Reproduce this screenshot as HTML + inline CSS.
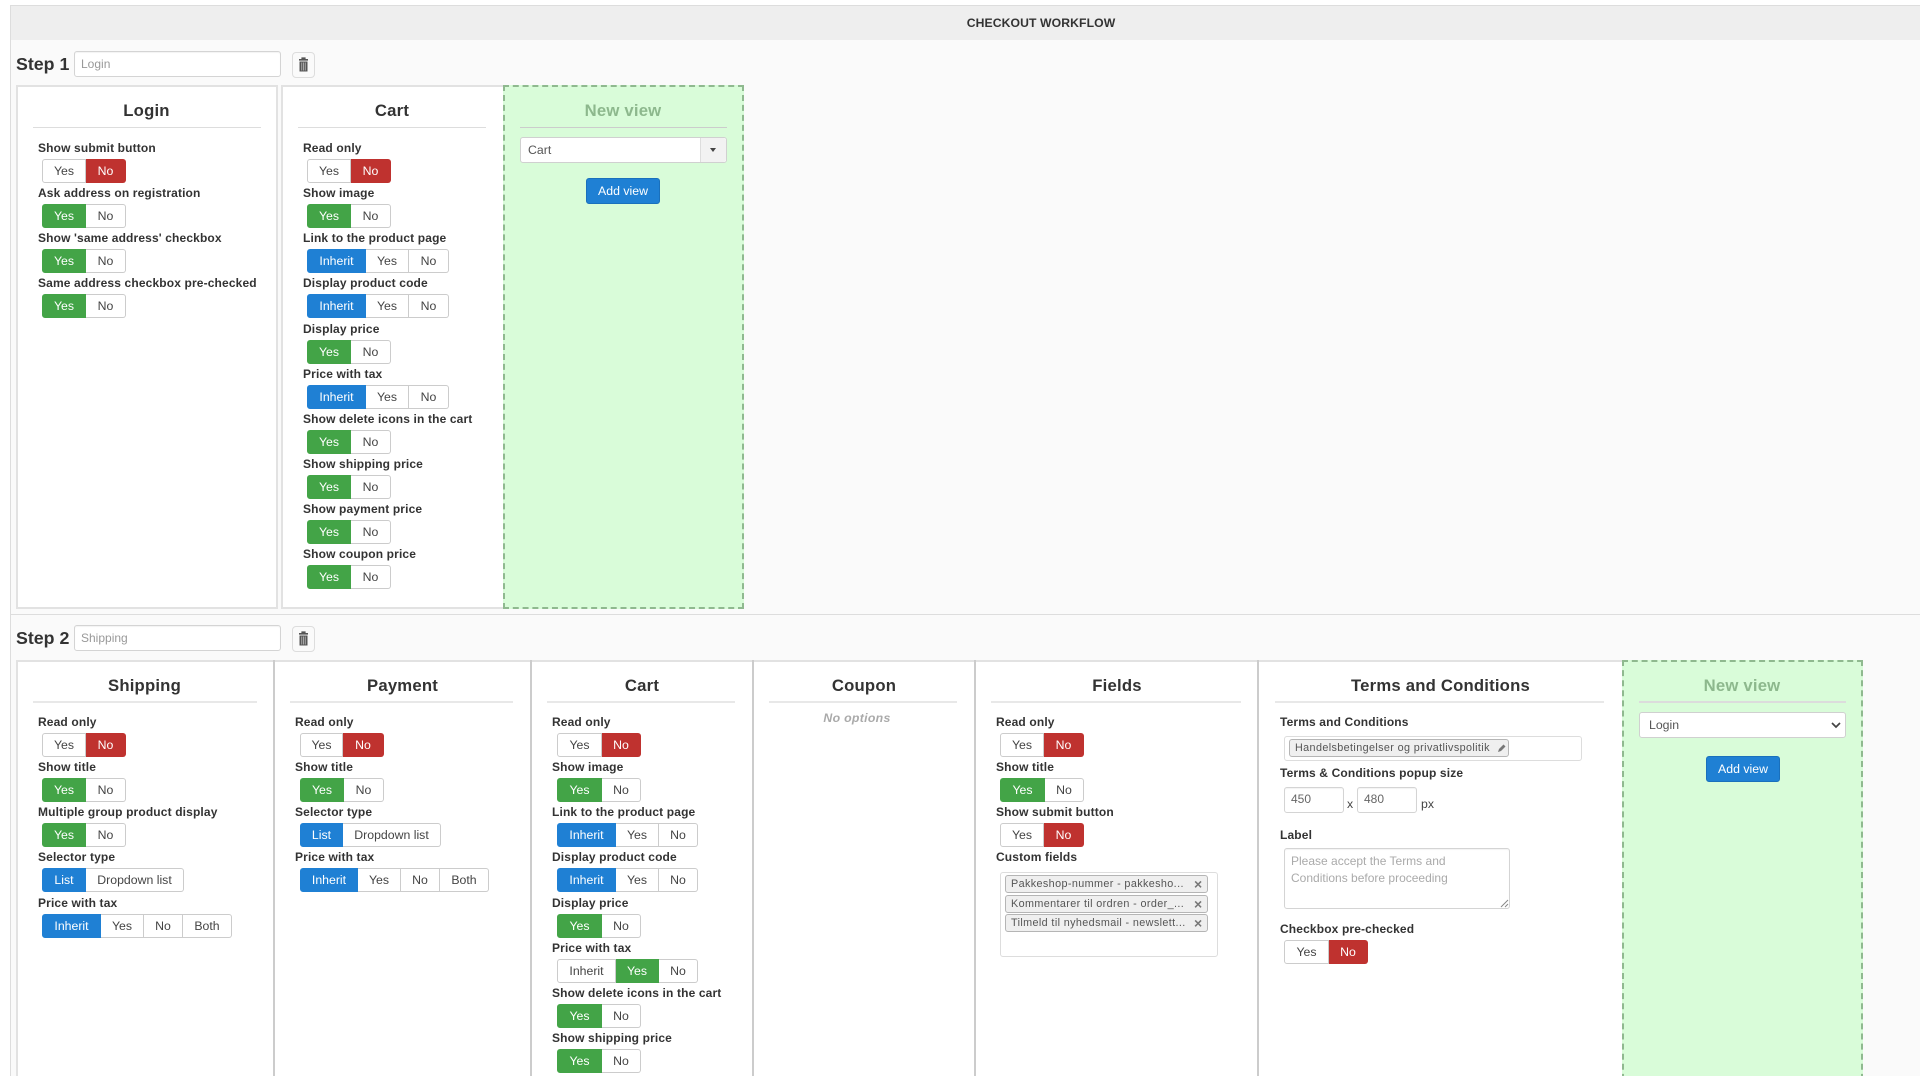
<!DOCTYPE html>
<html><head><meta charset="utf-8"><title>Checkout workflow</title>
<style>
html,body{margin:0;padding:0;background:#fff;width:1920px;height:1076px;overflow:hidden}
body{position:relative;font-family:"Liberation Sans",Arial,sans-serif;color:#333;filter:blur(.3px)}
.a{position:absolute}
#bg{left:10px;top:5px;width:1910px;height:1071px;background:#fafafa;border-left:1px solid #ddd;box-sizing:border-box}
#hd{left:10px;top:5px;width:1910px;height:35px;background:#eee;border-top:1px solid #ddd;border-left:1px solid #ddd;box-sizing:border-box;text-align:center;font-size:12.2px;line-height:35px;color:#333;font-weight:bold;text-indent:151px;letter-spacing:.1px}
#sep{left:11px;top:614px;width:1909px;height:1px;background:#ddd}
.st{font-size:17.8px;font-weight:bold;color:#333;left:16px;line-height:24px}
.in{background:#fff;border:1px solid #d4d4d4;border-radius:3px;box-sizing:border-box;box-shadow:inset 0 1px 1px rgba(0,0,0,.05);font-size:12px;color:#999;padding-left:6px}
.tr{left:292px;width:23px;height:26px;border:1px solid #ddd;border-radius:4px;box-sizing:border-box;background:#fafafa}
.p{background:#fff;border:2px solid #e2e2e2;box-sizing:border-box}
.ti{font-size:16.7px;font-weight:bold;color:#333;text-align:center;line-height:23px;letter-spacing:.2px;white-space:nowrap}
.hr{height:2px;background:#e8e8e8}
.c{position:absolute}
.r{height:45.17px;position:relative}
.r b{position:absolute;left:-4px;top:-1px;font-size:12px;line-height:19px;color:#333;white-space:nowrap;letter-spacing:.14px}
.g{position:absolute;left:0;top:19px;height:24px;display:flex;font-size:12.3px;line-height:22px;color:#444;text-align:center}
.g i{font-style:normal;display:block;box-sizing:border-box;background:#fff;border:1px solid #ccc;border-left:0;height:24px}
.g i:first-child{border-left:1px solid #ccc;border-radius:3px 0 0 3px}
.g i:last-child{border-radius:0 3px 3px 0}
.g i.gr{background:#43a447;border-color:#43a447;color:#fff}
.g i.rd{background:#bf322f;border-color:#bf322f;color:#fff}
.g i.bl{background:#1f80d4;border-color:#1f80d4;color:#fff}
.nv{background:#d9fcd9;border:2px dashed #8fb98f;box-sizing:border-box}
.nt{color:#8db88d}
.btn{background:#1f80d4;border:1px solid #1a70bc;border-radius:3px;color:#fff;font-size:12.3px;text-align:center;line-height:24px;box-sizing:border-box;width:74px;height:26px}
.sel{background:#fff;border:1px solid #d0d0d0;border-radius:3px;box-sizing:border-box;font-size:12.3px;color:#555;height:26px;line-height:24px;padding-left:7px}
.tag{background:#efefef;border:1px solid #b5b5b5;border-radius:3px;box-sizing:border-box;font-size:10.8px;color:#555;line-height:16px;padding-left:5px;white-space:nowrap;letter-spacing:.38px;overflow:hidden;height:18px}
.x{font-size:14px;color:#777;font-weight:bold;line-height:16px}
.l{font-size:12px;font-weight:bold;color:#333;line-height:16px;white-space:nowrap;letter-spacing:.14px}
</style></head><body>
<div class="a" id="bg"></div>
<div class="a" id="hd">CHECKOUT WORKFLOW</div>
<div class="a" id="sep"></div>

<div class="a st" style="top:52px">Step 1</div>
<div class="a in" style="left:74px;top:51px;width:207px;height:26px;line-height:24px">Login</div>
<div class="a tr" style="top:52px"><svg width="21" height="24" viewBox="0 0 21 24" style="display:block"><path d="M6 6h9v1.6H6z M8.4 4.4h4.2v1.6H8.4z M6.5 8.5h8v10h-8z" fill="#555"/><path d="M8.8 9.5v8M10.5 9.5v8M12.2 9.5v8" stroke="#ccc" stroke-width=".7"/></svg></div>

<div class="a p" style="left:16px;top:85px;width:262px;height:524px"></div>
<div class="a ti" style="left:16px;top:99px;width:261px">Login</div>
<div class="a hr" style="left:33px;top:127px;width:228px;height:1px;background:#ddd"></div>
<div class="c" style="left:42px;top:140px">
<div class="r"><b>Show submit button</b><div class="g"><i style="width:44px">Yes</i><i class="rd" style="width:40px">No</i></div></div>
<div class="r"><b>Ask address on registration</b><div class="g"><i class="gr" style="width:44px">Yes</i><i style="width:40px">No</i></div></div>
<div class="r"><b>Show 'same address' checkbox</b><div class="g"><i class="gr" style="width:44px">Yes</i><i style="width:40px">No</i></div></div>
<div class="r"><b>Same address checkbox pre-checked</b><div class="g"><i class="gr" style="width:44px">Yes</i><i style="width:40px">No</i></div></div>
</div>

<div class="a p" style="left:281px;top:85px;width:224px;height:524px"></div>
<div class="a ti" style="left:281px;top:99px;width:222px">Cart</div>
<div class="a hr" style="left:298px;top:127px;width:188px;height:1px;background:#ddd"></div>
<div class="c" style="left:307px;top:140px">
<div class="r"><b>Read only</b><div class="g"><i style="width:44px">Yes</i><i class="rd" style="width:40px">No</i></div></div>
<div class="r"><b>Show image</b><div class="g"><i class="gr" style="width:44px">Yes</i><i style="width:40px">No</i></div></div>
<div class="r"><b>Link to the product page</b><div class="g"><i class="bl" style="width:59px">Inherit</i><i style="width:43px">Yes</i><i style="width:40px">No</i></div></div>
<div class="r"><b>Display product code</b><div class="g"><i class="bl" style="width:59px">Inherit</i><i style="width:43px">Yes</i><i style="width:40px">No</i></div></div>
<div class="r"><b>Display price</b><div class="g"><i class="gr" style="width:44px">Yes</i><i style="width:40px">No</i></div></div>
<div class="r"><b>Price with tax</b><div class="g"><i class="bl" style="width:59px">Inherit</i><i style="width:43px">Yes</i><i style="width:40px">No</i></div></div>
<div class="r"><b>Show delete icons in the cart</b><div class="g"><i class="gr" style="width:44px">Yes</i><i style="width:40px">No</i></div></div>
<div class="r"><b>Show shipping price</b><div class="g"><i class="gr" style="width:44px">Yes</i><i style="width:40px">No</i></div></div>
<div class="r"><b>Show payment price</b><div class="g"><i class="gr" style="width:44px">Yes</i><i style="width:40px">No</i></div></div>
<div class="r"><b>Show coupon price</b><div class="g"><i class="gr" style="width:44px">Yes</i><i style="width:40px">No</i></div></div>
</div>

<div class="a nv" style="left:503px;top:85px;width:241px;height:524px"></div>
<div class="a ti nt" style="left:503px;top:99px;width:240px">New view</div>
<div class="a hr" style="left:520px;top:127px;width:207px;height:1px;background:#ccc"></div>
<div class="a sel" style="left:520px;top:137px;width:207px">Cart</div>
<div class="a" style="left:700px;top:138px;width:26px;height:24px;background:#f2f2f2;border-left:1px solid #ddd;box-sizing:border-box;border-radius:0 3px 3px 0"></div>
<div class="a" style="left:710px;top:148px;width:0;height:0;border-left:3.5px solid transparent;border-right:3.5px solid transparent;border-top:4px solid #444"></div>
<div class="a btn" style="left:586px;top:178px">Add view</div>

<div class="a st" style="top:626px">Step 2</div>
<div class="a in" style="left:74px;top:625px;width:207px;height:26px;line-height:24px">Shipping</div>
<div class="a tr" style="top:626px"><svg width="21" height="24" viewBox="0 0 21 24" style="display:block"><path d="M6 6h9v1.6H6z M8.4 4.4h4.2v1.6H8.4z M6.5 8.5h8v10h-8z" fill="#555"/><path d="M8.8 9.5v8M10.5 9.5v8M12.2 9.5v8" stroke="#ccc" stroke-width=".7"/></svg></div>

<div class="a p" style="left:16px;top:660px;width:1608px;height:430px"></div>
<div class="a" style="left:273px;top:660px;width:2px;height:416px;background:#ccc"></div>
<div class="a" style="left:530px;top:660px;width:2px;height:416px;background:#ccc"></div>
<div class="a" style="left:752px;top:660px;width:2px;height:416px;background:#ccc"></div>
<div class="a" style="left:974px;top:660px;width:2px;height:416px;background:#ccc"></div>
<div class="a" style="left:1257px;top:660px;width:2px;height:416px;background:#ccc"></div>

<div class="a ti" style="left:16px;top:674px;width:257px">Shipping</div>
<div class="a hr" style="left:33px;top:701px;width:224px"></div>
<div class="c" style="left:42px;top:714px">
<div class="r"><b>Read only</b><div class="g"><i style="width:44px">Yes</i><i class="rd" style="width:40px">No</i></div></div>
<div class="r"><b>Show title</b><div class="g"><i class="gr" style="width:44px">Yes</i><i style="width:40px">No</i></div></div>
<div class="r"><b>Multiple group product display</b><div class="g"><i class="gr" style="width:44px">Yes</i><i style="width:40px">No</i></div></div>
<div class="r"><b>Selector type</b><div class="g"><i class="bl" style="width:44px">List</i><i style="width:98px">Dropdown list</i></div></div>
<div class="r"><b>Price with tax</b><div class="g"><i class="bl" style="width:59px">Inherit</i><i style="width:43px">Yes</i><i style="width:39px">No</i><i style="width:49px">Both</i></div></div>
</div>

<div class="a ti" style="left:275px;top:674px;width:255px">Payment</div>
<div class="a hr" style="left:290px;top:701px;width:223px"></div>
<div class="c" style="left:300px;top:714px">
<div class="r"><b style="left:-5px">Read only</b><div class="g"><i style="width:43px">Yes</i><i class="rd" style="width:41px">No</i></div></div>
<div class="r"><b style="left:-5px">Show title</b><div class="g"><i class="gr" style="width:44px">Yes</i><i style="width:40px">No</i></div></div>
<div class="r"><b style="left:-5px">Selector type</b><div class="g"><i class="bl" style="width:43px">List</i><i style="width:98px">Dropdown list</i></div></div>
<div class="r"><b style="left:-5px">Price with tax</b><div class="g"><i class="bl" style="width:58px">Inherit</i><i style="width:43px">Yes</i><i style="width:39px">No</i><i style="width:49px">Both</i></div></div>
</div>

<div class="a ti" style="left:532px;top:674px;width:220px">Cart</div>
<div class="a hr" style="left:547px;top:701px;width:188px"></div>
<div class="c" style="left:557px;top:714px">
<div class="r"><b style="left:-5px">Read only</b><div class="g"><i style="width:45px">Yes</i><i class="rd" style="width:39px">No</i></div></div>
<div class="r"><b style="left:-5px">Show image</b><div class="g"><i class="gr" style="width:45px">Yes</i><i style="width:39px">No</i></div></div>
<div class="r"><b style="left:-5px">Link to the product page</b><div class="g"><i class="bl" style="width:59px">Inherit</i><i style="width:43px">Yes</i><i style="width:39px">No</i></div></div>
<div class="r"><b style="left:-5px">Display product code</b><div class="g"><i class="bl" style="width:59px">Inherit</i><i style="width:43px">Yes</i><i style="width:39px">No</i></div></div>
<div class="r"><b style="left:-5px">Display price</b><div class="g"><i class="gr" style="width:45px">Yes</i><i style="width:39px">No</i></div></div>
<div class="r"><b style="left:-5px">Price with tax</b><div class="g"><i style="width:59px">Inherit</i><i class="gr" style="width:43px">Yes</i><i style="width:39px">No</i></div></div>
<div class="r"><b style="left:-5px">Show delete icons in the cart</b><div class="g"><i class="gr" style="width:45px">Yes</i><i style="width:39px">No</i></div></div>
<div class="r"><b style="left:-5px">Show shipping price</b><div class="g"><i class="gr" style="width:45px">Yes</i><i style="width:39px">No</i></div></div>
</div>

<div class="a ti" style="left:754px;top:674px;width:220px">Coupon</div>
<div class="a hr" style="left:769px;top:701px;width:188px"></div>
<div class="a" style="left:754px;top:709px;width:206px;text-align:center;font-size:12.3px;font-weight:bold;font-style:italic;color:#aaa;line-height:18px;letter-spacing:.3px">No options</div>

<div class="a ti" style="left:976px;top:674px;width:282px">Fields</div>
<div class="a hr" style="left:991px;top:701px;width:250px"></div>
<div class="c" style="left:1000px;top:714px">
<div class="r"><b>Read only</b><div class="g"><i style="width:44px">Yes</i><i class="rd" style="width:40px">No</i></div></div>
<div class="r"><b>Show title</b><div class="g"><i class="gr" style="width:45px">Yes</i><i style="width:39px">No</i></div></div>
<div class="r"><b>Show submit button</b><div class="g"><i style="width:44px">Yes</i><i class="rd" style="width:40px">No</i></div></div>
<div class="r"><b>Custom fields</b></div>
</div>
<div class="a" style="left:1000px;top:872px;width:218px;height:85px;background:#fff;border:1px solid #ddd;border-radius:3px;box-sizing:border-box"></div>
<div class="a tag" style="left:1005px;top:875px;width:203px;padding-right:22px">Pakkeshop-nummer - pakkesho...</div>
<div class="a tag" style="left:1005px;top:895px;width:203px;padding-right:22px">Kommentarer til ordren - order_...</div>
<div class="a tag" style="left:1005px;top:914px;width:203px;padding-right:22px">Tilmeld til nyhedsmail - newslett...</div>
<div class="a x" style="left:1194px;top:876px">×</div>
<div class="a x" style="left:1194px;top:896px">×</div>
<div class="a x" style="left:1194px;top:915px">×</div>

<div class="a ti" style="left:1259px;top:674px;width:363px">Terms and Conditions</div>
<div class="a hr" style="left:1275px;top:701px;width:329px"></div>
<div class="a l" style="left:1280px;top:714px">Terms and Conditions</div>
<div class="a" style="left:1284px;top:736px;width:298px;height:25px;background:#fff;border:1px solid #ddd;border-radius:3px;box-sizing:border-box"></div>
<div class="a tag" style="left:1289px;top:739px;width:220px">Handelsbetingelser og privatlivspolitik</div>
<svg class="a" style="left:1496px;top:742px" width="11" height="12" viewBox="0 0 11 12"><path d="M2 10l1-3 4.5-4.5 2 2L5 9z" fill="#777"/></svg>
<div class="a l" style="left:1280px;top:765px">Terms &amp; Conditions popup size</div>
<div class="a in" style="left:1284px;top:787px;width:60px;height:26px;line-height:23px;color:#666">450</div>
<div class="a" style="left:1347px;top:796px;font-size:12.3px;line-height:16px;color:#444">x</div>
<div class="a in" style="left:1357px;top:787px;width:60px;height:26px;line-height:23px;color:#666">480</div>
<div class="a" style="left:1421px;top:796px;font-size:12.3px;line-height:16px;color:#444">px</div>
<div class="a l" style="left:1280px;top:827px">Label</div>
<div class="a in" style="left:1284px;top:848px;width:226px;height:61px;line-height:17px;padding-top:4px;color:#aaa">Please accept the Terms and<br>Conditions before proceeding</div>
<svg class="a" style="left:1498px;top:897px" width="11" height="11" viewBox="0 0 11 11"><path d="M3 10l7-7M7 10l3-3" stroke="#888" stroke-width="1"/></svg>
<div class="c" style="left:1284px;top:921px">
<div class="r" style="height:43px"><b>Checkbox pre-checked</b><div class="g"><i style="width:45px">Yes</i><i class="rd" style="width:39px">No</i></div></div>
</div>

<div class="a nv" style="left:1622px;top:660px;width:241px;height:430px"></div>
<div class="a ti nt" style="left:1622px;top:674px;width:240px">New view</div>
<div class="a hr" style="left:1639px;top:701px;width:207px;background:#dcdcdc"></div>
<div class="a sel" style="left:1639px;top:712px;width:207px;padding-left:9px">Login</div>
<svg class="a" style="left:1831px;top:721px" width="10" height="8" viewBox="0 0 10 8"><path d="M1 2l4 4 4-4" fill="none" stroke="#444" stroke-width="1.7"/></svg>
<div class="a btn" style="left:1706px;top:756px">Add view</div>
</body></html>
